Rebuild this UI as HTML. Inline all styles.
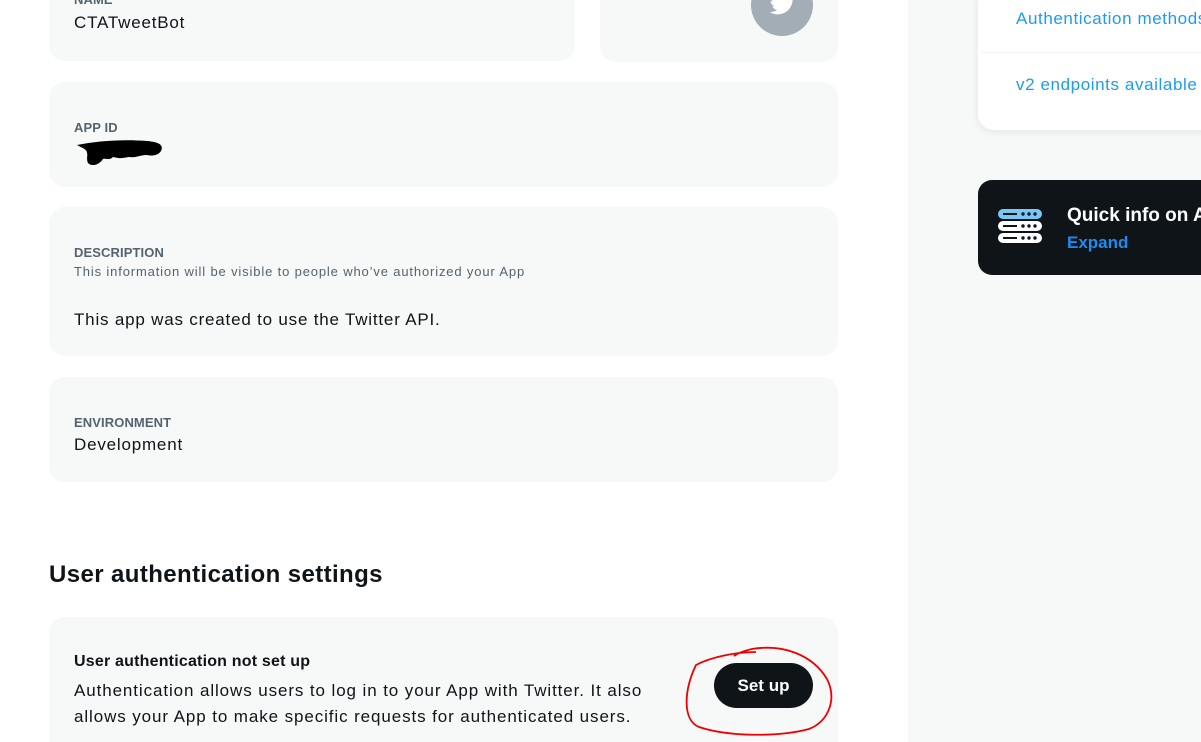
<!DOCTYPE html>
<html style="height:742px;overflow:hidden"><head><meta charset="utf-8"><style>
body{margin:0;width:1201px;height:742px;overflow:hidden;background:#fff;font-family:"Liberation Sans",Arial,sans-serif;color:#0f1419;position:relative}
.c{position:absolute;background:#f7f8f8;border-radius:16px}
.lab{position:absolute;font-size:13px;font-weight:bold;color:#536471;letter-spacing:0.1px}
.val{position:absolute;font-size:17px;color:#0f1419;letter-spacing:0.8px}
.side{position:absolute;left:908px;top:0;width:293px;height:742px;background:#f7f8f8}
</style></head><body>
<div class="c" style="left:49px;top:-20px;width:526px;height:81px"></div>
<div class="lab" style="left:74px;top:-8px">NAME</div>
<div class="val" style="left:74px;top:13px">CTATweetBot</div>
<div class="c" style="left:600px;top:-20px;width:238px;height:82px"></div>
<svg style="position:absolute;left:751px;top:-26px" width="62" height="62"><circle cx="31" cy="31" r="31" fill="#a3adb5"/><path d="M44 22c-1 .5-2 .8-3 .9 1-.7 2-1.6 2.300-2.800-1 .6-2.100 1-3.300 1.300a5.200 5.200 0 0 0-8.900 4.700c-4.300-.2-8.100-2.300-10.700-5.500-1.400 2.400-.7 5.500 1.600 7-.9 0-1.700-.3-2.400-.7 0 2.500 1.800 4.700 4.200 5.200-.8.2-1.600.3-2.400.1.700 2.100 2.600 3.600 4.900 3.600-2.200 1.700-5 2.500-7.700 2.200 2.400 1.500 5.200 2.400 8 2.400 9.700 0 15-8 15-15v-.7c1-.8 1.900-1.700 2.600-2.700z" fill="#fff"/></svg>
<div class="c" style="left:49px;top:82px;width:789px;height:105px"></div>
<div class="lab" style="left:74px;top:120px">APP ID</div>
<svg style="position:absolute;left:74px;top:139px" width="92" height="26"><path d="M3 6c20-4 45-6 70-4 12 1 17 4 14 10-3 5-10 5-14 4-8 0-10 3-18 2-6 1-8 2-16 0-4 4-8 1-10 2-4 6-11 8-15 4-2-4 0-8-1-10 0-4-5-5-10-8z" fill="#000"/></svg>
<div class="c" style="left:49px;top:207px;width:789px;height:149px"></div>
<div class="lab" style="left:74px;top:245px">DESCRIPTION</div>
<div style="position:absolute;left:74px;top:264px;font-size:13px;color:#536471;letter-spacing:0.85px">This information will be visible to people who’ve authorized your App</div>
<div class="val" style="left:74px;top:310px">This app was created to use the Twitter API.</div>
<div class="c" style="left:49px;top:377px;width:789px;height:105px"></div>
<div class="lab" style="left:74px;top:415px">ENVIRONMENT</div>
<div class="val" style="left:74px;top:435px">Development</div>
<div style="position:absolute;left:49px;top:561px;font-size:24px;font-weight:bold;letter-spacing:0.4px">User authentication settings</div>
<div class="c" style="left:49px;top:617px;width:789px;height:160px"></div>
<div style="position:absolute;left:74px;top:653px;font-size:16px;font-weight:bold;letter-spacing:0.2px">User authentication not set up</div>
<div style="position:absolute;left:74px;top:678px;font-size:17px;line-height:26px;width:640px;letter-spacing:0.9px">Authentication allows users to log in to your App with Twitter. It also<br>allows your App to make specific requests for authenticated users.</div>
<div style="position:absolute;left:714px;top:663px;width:99px;height:45px;border-radius:23px;background:#0f1419;color:#fff;font-weight:bold;font-size:17px;line-height:45px;text-align:center">Set up</div>
<svg style="position:absolute;left:680px;top:635px" width="170" height="107"><path d="M76 17c-20 0-45 5-60 13-12 25-14 55 3 62 30 10 80 10 110 2 20-8 28-30 18-50-15-25-45-35-75-30-8 2-14 4-18 7" fill="none" stroke="#e00" stroke-width="1.8"/></svg>
<div class="side"></div>
<div style="position:absolute;left:978px;top:-20px;width:240px;height:150px;background:#fff;border-radius:16px;box-shadow:0 2px 10px rgba(0,0,0,.08)"></div>
<div style="position:absolute;left:981px;top:52px;width:220px;height:1px;background:#eff3f4"></div>
<div style="position:absolute;left:1016px;top:9px;font-size:17px;color:#1d9bf0;white-space:nowrap;letter-spacing:0.6px">Authentication methods</div>
<div style="position:absolute;left:1016px;top:75px;font-size:17px;color:#1d9bf0;white-space:nowrap;letter-spacing:0.6px">v2 endpoints available</div>
<div style="position:absolute;left:978px;top:180px;width:240px;height:95px;background:#0f1419;border-radius:14px"></div>
<svg style="position:absolute;left:997px;top:209px" width="46" height="36"><rect x="1" y="0" width="44" height="10" rx="5" fill="#78c8f5"/><rect x="1" y="12" width="44" height="10" rx="5" fill="#fff"/><rect x="1" y="24" width="44" height="10" rx="5" fill="#fff"/><g stroke="#0f1419" stroke-width="2"><line x1="6" y1="5" x2="20" y2="5"/><line x1="6" y1="17" x2="20" y2="17"/><line x1="6" y1="29" x2="20" y2="29"/></g><g fill="#0f1419"><circle cx="26" cy="5" r="1.7"/><circle cx="32" cy="5" r="1.7"/><circle cx="38" cy="5" r="1.7"/><circle cx="26" cy="17" r="1.7"/><circle cx="32" cy="17" r="1.7"/><circle cx="38" cy="17" r="1.7"/><circle cx="26" cy="29" r="1.7"/><circle cx="32" cy="29" r="1.7"/><circle cx="38" cy="29" r="1.7"/></g></svg>
<div style="position:absolute;left:1067px;top:205px;font-size:19px;font-weight:bold;color:#fff;white-space:nowrap">Quick info on API</div>
<div style="position:absolute;left:1067px;top:233px;font-size:17px;font-weight:bold;color:#1d8cf0">Expand</div>
</body></html>
